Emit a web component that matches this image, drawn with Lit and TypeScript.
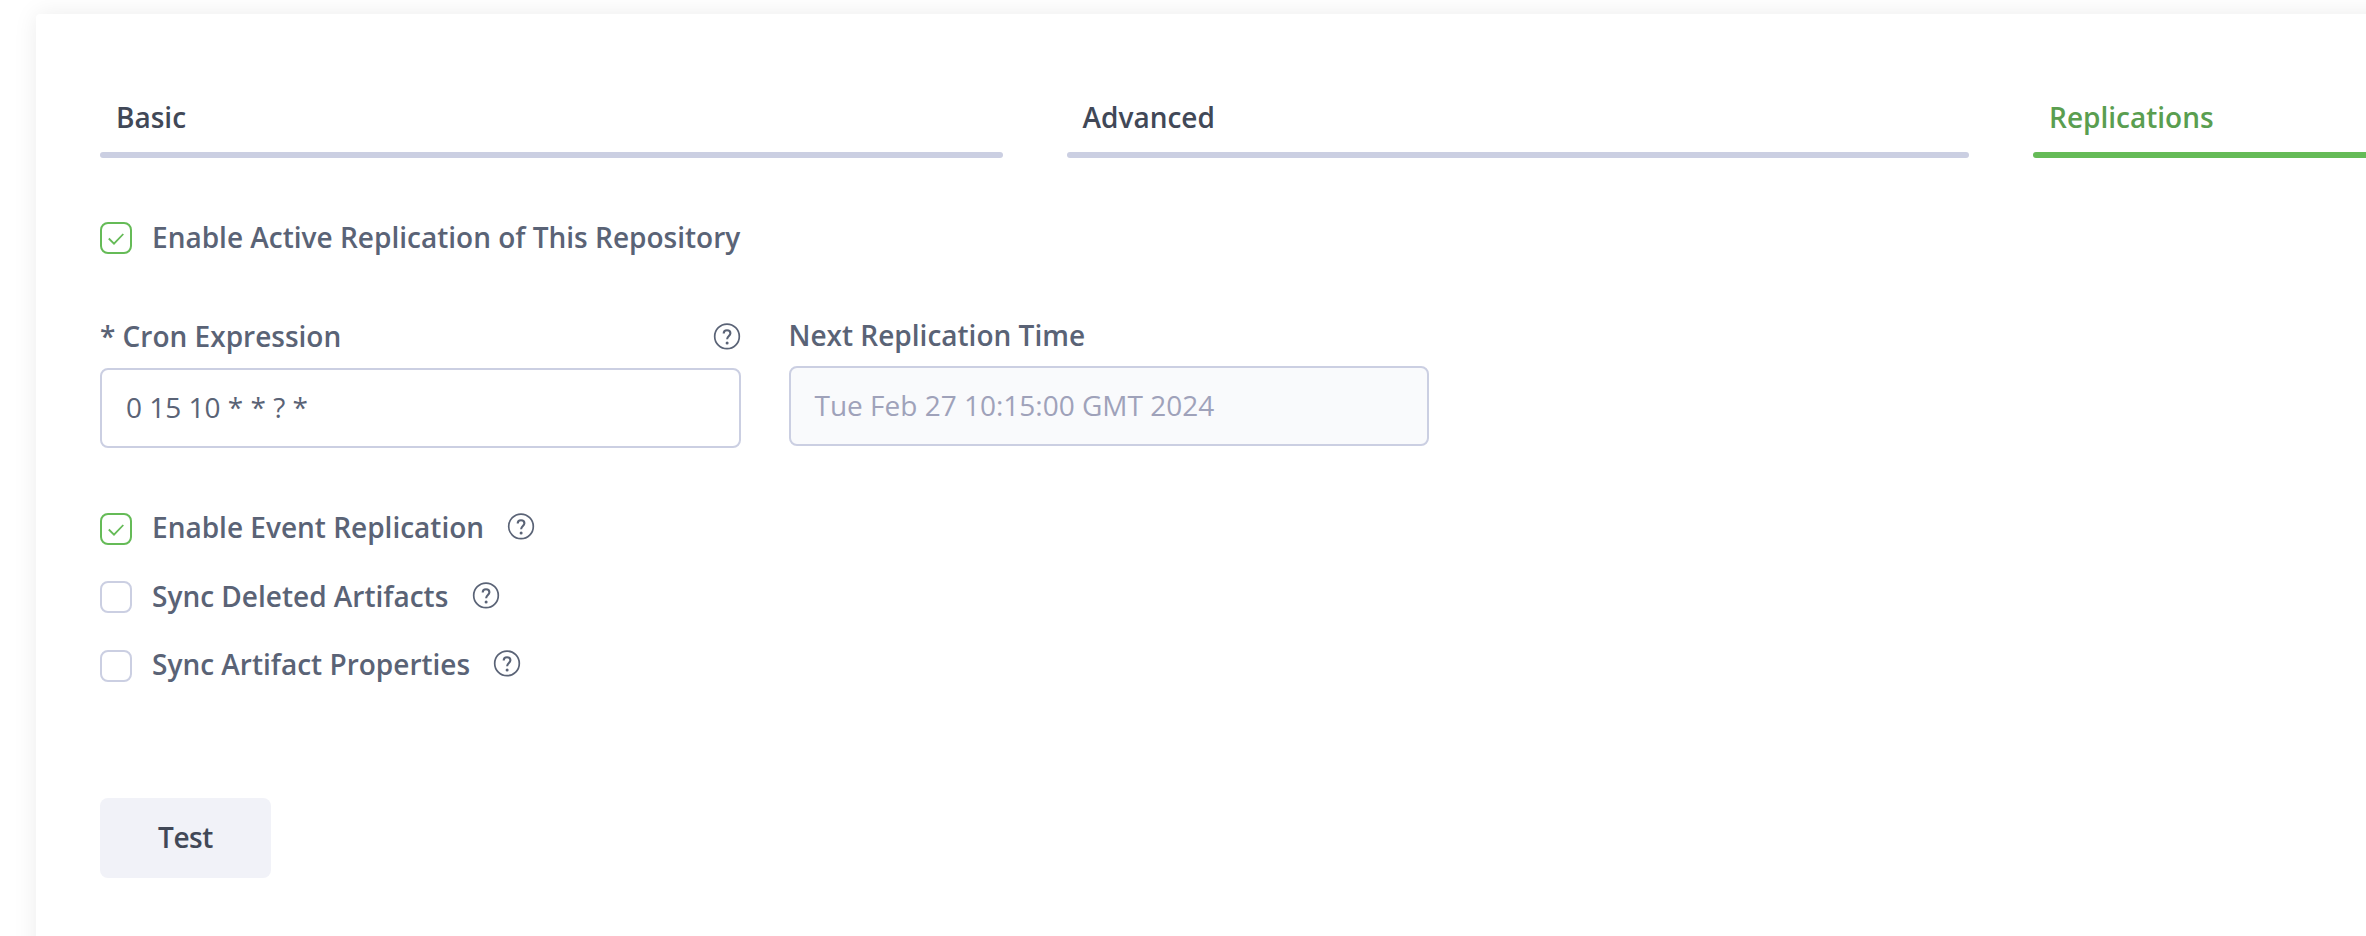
import { LitElement, html, css } from "lit";
import { customElement, property } from "lit/decorators.js";

@customElement("help-icon")
class HelpIcon extends LitElement {
  static styles = css`
    :host { display: block; width: 28px; height: 28px; flex: none; color: #5a6376; }
    svg { display: block; }
  `;
  render() {
    return html`<svg width="28" height="28" viewBox="0 0 28 28" fill="none" stroke="currentColor">
      <circle cx="14" cy="14.4" r="12.3" stroke-width="1.7" />
      <path d="M10.7 11.6C10.7 9.5 12.1 8.2 14 8.2S17.4 9.5 17.4 11.3C17.4 13.9 14.1 14.1 14.1 17.3" stroke-width="2.1" />
      <circle cx="14.1" cy="21" r="1.5" fill="currentColor" stroke="none" />
    </svg>`;
  }
}

@customElement("check-option")
class CheckOption extends LitElement {
  @property() label = "";
  @property({ type: Boolean }) checked = false;
  @property({ type: Boolean }) help = false;
  static styles = css`
    :host { display: flex; align-items: flex-start; height: 32px; }
    .box { box-sizing: border-box; width: 32px; height: 32px; flex: none; border: 2px solid #cbcfe2; border-radius: 8px; background: #fff; }
    .checked { border-color: #65bb57; }
    svg { display: block; }
    .label { margin: -4px 0 0 20px; line-height: 38px; white-space: nowrap; }
    :host([help]) .label { margin-top: -4.8px; }
    help-icon { margin-left: 23.2px; margin-top: -0.8px; }
  `;
  render() {
    return html`
      <div class="box ${this.checked ? "checked" : ""}">
        ${this.checked
          ? html`<svg width="28" height="28" viewBox="0 0 28 28" fill="none" stroke="#65bb57" stroke-width="1.8"><path d="M6.8 14.5L12 19.7L21.3 10" /></svg>`
          : ""}
      </div>
      <span class="label">${this.label}</span>
      ${this.help ? html`<help-icon></help-icon>` : ""}
    `;
  }
}

@customElement("app-root")
class AppRoot extends LitElement {
  static styles = css`
    :host {
      display: block; box-sizing: border-box; height: 936px; overflow: hidden;
      padding: 14px 0 0 36px; background: #fff; color: #5a6376;
      font: 600 28px/38px "Open Sans", "Noto Sans", sans-serif;
    }
    .card { box-sizing: border-box; width: 2964px; height: 1100px; padding: 75px 64px; border-radius: 4px; box-shadow: 0 0 24px rgba(0, 0, 0, 0.08); background: #fff; }
    .tabs { display: grid; grid-template-columns: repeat(3, 902.5px); gap: 64px; }
    .tab { box-sizing: border-box; height: 69px; padding: 9px 16px 0; color: #414857; position: relative; }
    .bar { position: absolute; left: 0; right: 0; bottom: 0; height: 6px; border-radius: 3px; background: #cbcfe2; }
    .active { color: #5a9e50; }
    .active .bar { background: #65bb57; }
    .enable { margin-top: 64px; }
    .fields { display: flex; gap: 48px; margin-top: 62px; height: 132px; }
    .field { width: 640.5px; }
    .head { display: flex; justify-content: space-between; align-items: center; height: 40px; margin-bottom: 12px; }
    .input { box-sizing: border-box; height: 80px; border: 2px solid #cbcfe2; border-radius: 8px; padding: 0 24px; line-height: 74px; font-weight: 400; }
    .next .head { height: 38px; }
    .next .input { background: #f9fafc; color: #9fa2ba; }
    .options { display: flex; flex-direction: column; gap: 36.4px; margin-top: 65px; }
    .btn { display: block; margin-top: 116px; width: 171px; height: 80px; border: 0; border-radius: 8px; background: #f1f2f8; color: #414857; font: inherit; letter-spacing: -0.4px; padding: 0 0 2px; }
  `;
  render() {
    return html`<div class="card">
      <div class="tabs">
        <div class="tab"><span>Basic</span><div class="bar"></div></div>
        <div class="tab"><span>Advanced</span><div class="bar"></div></div>
        <div class="tab active"><span>Replications</span><div class="bar"></div></div>
      </div>
      <check-option class="enable" checked label="Enable Active Replication of This Repository"></check-option>
      <div class="fields">
        <div class="field">
          <div class="head"><span>* Cron Expression</span><help-icon></help-icon></div>
          <div class="input">0 15 10 * * ? *</div>
        </div>
        <div class="field next">
          <div class="head"><span>Next Replication Time</span></div>
          <div class="input">Tue Feb 27 10:15:00 GMT 2024</div>
        </div>
      </div>
      <div class="options">
        <check-option checked help label="Enable Event Replication"></check-option>
        <check-option help label="Sync Deleted Artifacts"></check-option>
        <check-option help label="Sync Artifact Properties"></check-option>
      </div>
      <button class="btn">Test</button>
    </div>`;
  }
}
